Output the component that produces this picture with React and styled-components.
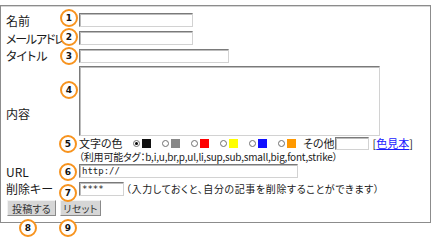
import React from 'react';
import styled, { createGlobalStyle } from 'styled-components';

const Global = createGlobalStyle`
  html, body { margin: 0; padding: 0; background: #fff; }
  body {
    font-family: "Noto Sans CJK JP", "Noto Sans", sans-serif;
    font-feature-settings: "palt";
    color: #1a1a1a;
  }
`;

const Page = styled.div`
  position: relative;
  width: 431px;
  height: 250px;
  padding-top: 5px;
  box-sizing: border-box;
`;

const Panel = styled.div`
  box-sizing: border-box;
  width: 431px;
  height: 218px;
  border: 1px solid #8c8c8c;
  box-shadow: inset 0 1px 0 #d6d6d6;
  padding-top: 5px;
  display: grid;
  grid-template-columns: 78px 1fr;
  grid-template-rows: 18px 18px 17px 99px 16px 19px 22px;
`;

const Label = styled.div`
  padding-left: 5px;
  font-size: 12px;
  white-space: nowrap;
  display: flex;
  align-items: center;
  letter-spacing: ${(p) => (p.$tight ? '-1.2px' : '0')};
`;

const Field = styled.div`
  display: flex;
  align-items: center;
  gap: 2px;
  font-size: 10px;
  white-space: nowrap;
`;

const TextInput = styled.div`
  box-sizing: border-box;
  flex-shrink: 0;
  width: ${(p) => p.$w}px;
  height: ${(p) => p.$h || 14}px;
  border-top: 1px solid #7a7a7a;
  border-left: 1px solid #7a7a7a;
  border-right: 1px solid #d2d2d2;
  border-bottom: 1px solid #d2d2d2;
  box-shadow: inset 1px 1px 0 #bdbdbd;
  background: #fff;
  font-size: 9px;
  line-height: 12px;
  padding-left: 2px;
  font-family: "DejaVu Sans Mono", monospace;
  color: #222;
`;

const Content = styled.div`
  display: flex;
  flex-direction: column;
`;

const TextArea = styled(TextInput)`
  margin-top: 2px;
`;

const ColorRow = styled.div`
  height: 14px;
  line-height: 13px;
  display: flex;
  align-items: center;
  font-size: 11px;
  white-space: nowrap;
`;

const ColorTitle = styled.span`
  width: 54px;
`;

const Group = styled.span`
  display: inline-flex;
  align-items: center;
  gap: 2px;
  margin-right: ${(p) => (p.$last ? 0 : 11)}px;
`;

const Radio = styled.span`
  box-sizing: border-box;
  width: 7px;
  height: 7px;
  border-radius: 50%;
  border: 1px solid #707070;
  background: #fff;
  display: inline-flex;
  align-items: center;
  justify-content: center;
  &::after {
    content: '';
    width: 3px;
    height: 3px;
    border-radius: 50%;
    background: ${(p) => (p.$checked ? '#000' : 'transparent')};
  }
`;

const Swatch = styled.span`
  width: 9px;
  height: 9px;
  background: ${(p) => p.$c};
`;

const Other = styled.span`
  margin-left: 7px;
`;

const Small = styled.span`
  margin-left: 4px;
`;

const Link = styled.a`
  color: #1a1aff;
  text-decoration: underline;
`;

const TagLine = styled.div`
  height: 13px;
  font-size: 10px;
  line-height: 12px;
  padding-top: 1px;
  box-sizing: border-box;
  white-space: nowrap;
  letter-spacing: -0.2px;
`;

const Note = styled.span`
  font-size: 10px;
  letter-spacing: 0.6px;
`;

const Buttons = styled.div`
  grid-column: 1 / -1;
  display: flex;
  align-items: center;
  gap: 4px;
  padding-left: 6px;
  padding-bottom: 2px;
`;

const Button = styled.div`
  box-sizing: border-box;
  width: ${(p) => p.$w}px;
  height: 16px;
  background: #d6d6d6;
  border-top: 1px solid #f2f2f2;
  border-left: 1px solid #f2f2f2;
  border-right: 1px solid #8a8a8a;
  border-bottom: 1px solid #8a8a8a;
  font-size: 10px;
  color: #333;
  display: flex;
  align-items: center;
  justify-content: center;
  letter-spacing: 0.3px;
`;

const Badge = styled.div`
  position: absolute;
  left: ${(p) => p.$x - 9}px;
  top: ${(p) => p.$y - 9}px;
  box-sizing: border-box;
  width: 18px;
  height: 18px;
  border-radius: 50%;
  border: 2px solid #f7931e;
  background: #fff;
  font-family: "DejaVu Sans", sans-serif;
  font-weight: bold;
  font-size: 9px;
  color: #111;
  display: flex;
  align-items: center;
  justify-content: center;
`;

const colors = ['#111', '#888', '#ff0000', '#ffff00', '#1010ff', '#ff9900'];

const badges = [
  [1, 69, 18],
  [2, 69, 37],
  [3, 69, 56],
  [4, 69, 90],
  [5, 68, 144],
  [6, 68, 172],
  [7, 68, 193],
  [8, 28, 228],
  [9, 68, 228],
];

export default function App() {
  return (
    <Page>
      <Global />
      <Panel>
        <Label>名前</Label>
        <Field><TextInput $w={114} /></Field>
        <Label $tight>メールアドレス</Label>
        <Field><TextInput $w={114} /></Field>
        <Label>タイトル</Label>
        <Field><TextInput $w={150} /></Field>
        <Label>内容</Label>
        <Content>
          <TextArea $w={301} $h={70} />
          <ColorRow>
            <ColorTitle>文字の色</ColorTitle>
            {colors.map((c, i) => (
              <Group key={c} $last={i === colors.length - 1}>
                <Radio $checked={i === 0} />
                <Swatch $c={c} />
              </Group>
            ))}
            <Other>その他</Other>
            <TextInput $w={34} $h={13} />
            <Small>[<Link href="#">色見本</Link>]</Small>
          </ColorRow>
          <TagLine>（利用可能タグ：b,i,u,br,p,ul,li,sup,sub,small,big,font,strike）</TagLine>
        </Content>
        <Label>URL</Label>
        <Field><TextInput $w={219}>http://</TextInput></Field>
        <Label>削除キー</Label>
        <Field>
          <TextInput $w={45}>****</TextInput>
          <Note>（入力しておくと、自分の記事を削除することができます）</Note>
        </Field>
        <Buttons>
          <Button $w={49}>投稿する</Button>
          <Button $w={41}>リセット</Button>
        </Buttons>
      </Panel>
      {badges.map(([n, x, y]) => (
        <Badge key={n} $x={x} $y={y}>{n}</Badge>
      ))}
    </Page>
  );
}
